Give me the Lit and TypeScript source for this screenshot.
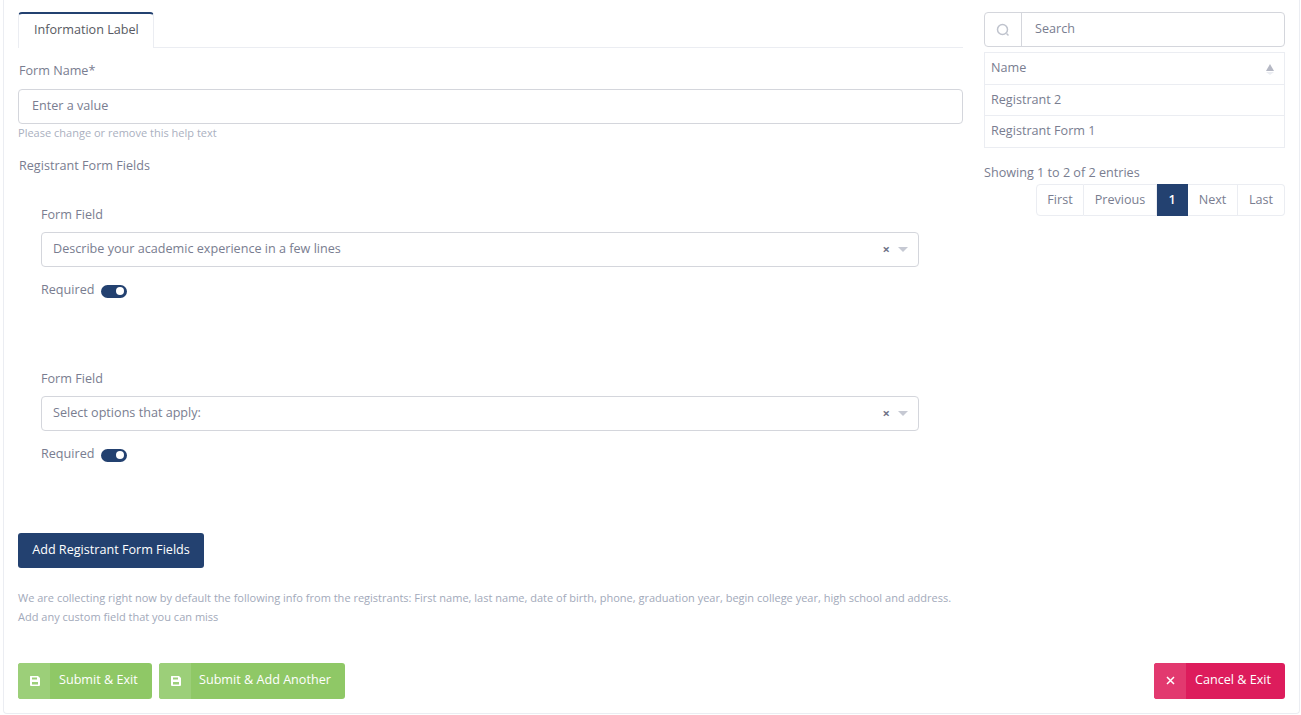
import { LitElement, html, css, svg } from "lit";
import { customElement } from "lit/decorators.js";

const saveIcon = svg`<svg class="ico" width="12" height="12" viewBox="0 0 12 12"><path fill="currentColor" fill-rule="evenodd" d="M1.500 1H9l2 2v7a1 1 0 0 1-1 1H2a1 1 0 0 1-1-1V1.500A.5.5 0 0 1 1.500 1ZM3 2.500V4.500H8V2.500ZM3 7V9.500H9V7Z"/></svg>`;
const closeIcon = svg`<svg width="9" height="9" viewBox="0 0 9 9" fill="none" stroke="currentColor" stroke-width="1.500"><path d="M1 1l7 7M8 1l-7 7"/></svg>`;

@customElement("app-root")
export class AppRoot extends LitElement {
  static styles = css`
    :host { display: block; font-family: "Open Sans", sans-serif; font-size: 12.62px; color: #797d90; }
    * { box-sizing: border-box; }
    .card { margin-left: 3px; width: 1297px; height: 714px; border: 1px solid #ebedf2; border-top: 0; border-radius: 0 0 4px 4px; padding: 12px 14px 14px 14px; display: flex; flex-direction: column; background: #fff; }
    .main { display: flex; gap: 21px; flex: 1; }
    .left { width: 945px; }
    .right { width: 301px; }
    .tabs { height: 36px; border-bottom: 1px solid #ebedf2; }
    .tab { display: inline-flex; align-items: center; height: 36px; width: 136px; padding: 0 0 4px 15px; color: #575962; border: 1px solid #ebedf2; border-top: 2px solid #234170; border-bottom: 0; border-radius: 4px 4px 0 0; background: #fff; }
    .label { height: 18px; line-height: 20px; }
    .name-label { margin-top: 13px; padding-left: 1px; }
    .input { height: 35px; border: 1px solid #d4d6dc; border-radius: 4px; display: flex; align-items: center; background: #fff; }
    .name-input { margin-top: 10px; padding: 0 0 2px 13px; }
    .help { font-size: 11.02px; line-height: 15px; color: #aab0c0; margin-top: 1px; }
    .fields-title { margin-top: 16px; padding-left: 1px; }
    .group { margin: 0 44px 0 23px; height: 164px; }
    .group.first { margin-top: 31px; }
    .select { margin-top: 9px; padding: 0 10px 0 11px; justify-content: space-between; }
    .t { padding-bottom: 2px; }
    .select-end { display: flex; align-items: center; gap: 8px; }
    .clear { font-size: 13px; font-weight: 700; color: #6f7488; line-height: 1; }
    .caret { width: 0; height: 0; border-left: 5px solid transparent; border-right: 5px solid transparent; border-top: 5px solid #c6c9d3; }
    .req { display: flex; align-items: center; gap: 7px; margin-top: 14px; line-height: 18px; }
    .req-t { padding-bottom: 2px; }
    .switch { width: 26px; height: 13px; border-radius: 7px; background: #234170; display: flex; align-items: center; justify-content: flex-end; padding-right: 3px; }
    .knob { width: 8px; height: 8px; border-radius: 50%; background: #fff; }
    .add { display: inline-flex; align-items: center; height: 35px; width: 186px; justify-content: center; padding-bottom: 2px; background: #234170; color: #fff; border-radius: 3px; font-weight: 500; }
    .note { margin-top: 20px; font-size: 11.02px; line-height: 19px; color: #a2a9ba; white-space: nowrap; }
    .search { display: flex; height: 35px; }
    .search-ico { width: 37px; border-right: 1px solid #d4d6dc; display: flex; align-items: center; justify-content: center; height: 100%; color: #bfc3cd; }
    .search-txt { padding: 0 0 2px 13px; }
    table { border-collapse: collapse; width: 100%; margin-top: 5px; }
    td, th { border: 1px solid #ebedf2; padding: 0 6px 2px; height: 31px; font-weight: 400; text-align: left; }
    th { height: 32px; padding-bottom: 2px; }
    tr:last-child td { height: 32px; padding-bottom: 3px; }
    .th-in { display: flex; justify-content: space-between; align-items: center; padding-right: 4px; }
    .sort { display: flex; flex-direction: column; gap: 1px; margin-top: 3px; }
    .sort::before { content: ""; width: 0; height: 0; border-left: 4px solid transparent; border-right: 4px solid transparent; border-bottom: 7px solid #b5b8c4; }
    .sort::after { content: ""; width: 0; height: 0; border-left: 4px solid transparent; border-right: 4px solid transparent; border-top: 3px solid #ebedf2; }
    .showing { margin-top: 15px; height: 18px; line-height: 20px; }
    .pager { display: flex; justify-content: flex-end; margin-top: 3px; }
    .pg { height: 32px; display: flex; align-items: center; justify-content: center; padding-bottom: 2px; border: 1px solid #ebedf2; border-left-width: 0; }
    .pg:first-child { border-left-width: 1px; border-radius: 4px 0 0 4px; }
    .pg:last-child { border-radius: 0 4px 4px 0; }
    .pg.on { background: #234170; border-color: #234170; color: #fff; font-weight: 600; }
    .w48 { width: 48px; }
    .w73 { width: 73px; }
    .w31 { width: 31px; }
    .w50 { width: 50px; }
    .w47 { width: 47px; }
    .actions { display: flex; gap: 7px; }
    .btn { height: 36px; display: flex; align-items: stretch; color: #fff; border-radius: 3px; overflow: hidden; }
    .btn-i { width: 32px; flex: none; display: flex; align-items: center; justify-content: center; padding: 0 0 1px 1px; }
    .btn-t { display: flex; align-items: center; padding: 0 0 4px 9px; white-space: nowrap; }
    .b134 { width: 134px; }
    .b186 { width: 186px; }
    .b131 { width: 131px; }
    .b186 .btn-t { padding-left: 8px; }
    .green { background: #8fc866; }
    .green .btn-i { background: #9ccf79; }
    .red { background: #dd1c5c; margin-left: auto; }
    .red .btn-i { background: #e2396f; }
  `;

  private field(label: string, first: boolean) {
    return html`<div class="group ${first ? "first" : ""}">
      <div class="label">Form Field</div>
      <div class="input select">
        <span class="t">${label}</span>
        <span class="select-end"><span class="clear">×</span><span class="caret"></span></span>
      </div>
      <div class="req"><span class="req-t">Required</span><span class="switch"><span class="knob"></span></span></div>
    </div>`;
  }

  render() {
    return html`<div class="card">
      <div class="main">
        <div class="left">
          <div class="tabs"><div class="tab">Information Label</div></div>
          <div class="label name-label">Form Name*</div>
          <div class="input name-input">Enter a value</div>
          <div class="help">Please change or remove this help text</div>
          <div class="label fields-title">Registrant Form Fields</div>
          ${this.field("Describe your academic experience in a few lines", true)}
          ${this.field("Select options that apply:", false)}
          <div class="add">Add Registrant Form Fields</div>
          <div class="note">We are collecting right now by default the following info from the registrants: First name, last name, date of birth, phone, graduation year, begin college year, high school and address.<br />Add any custom field that you can miss</div>
        </div>
        <div class="right">
          <div class="input search">
            <span class="search-ico"><svg width="14" height="14" viewBox="0 0 14 14" fill="none" stroke="currentColor" stroke-width="1.500"><circle cx="6.500" cy="6.500" r="5"/><path d="M10.500 10.500l2 2"/></svg></span>
            <span class="search-txt">Search</span>
          </div>
          <table>
            <tr><th><div class="th-in"><span>Name</span><span class="sort"></span></div></th></tr>
            <tr><td>Registrant 2</td></tr>
            <tr><td>Registrant Form 1</td></tr>
          </table>
          <div class="showing">Showing 1 to 2 of 2 entries</div>
          <div class="pager">
            <div class="pg w48">First</div>
            <div class="pg w73">Previous</div>
            <div class="pg on w31">1</div>
            <div class="pg w50">Next</div>
            <div class="pg w47">Last</div>
          </div>
        </div>
      </div>
      <div class="actions">
        <div class="btn green b134"><span class="btn-i">${saveIcon}</span><span class="btn-t">Submit &amp; Exit</span></div>
        <div class="btn green b186"><span class="btn-i">${saveIcon}</span><span class="btn-t">Submit &amp; Add Another</span></div>
        <div class="btn red b131"><span class="btn-i">${closeIcon}</span><span class="btn-t">Cancel &amp; Exit</span></div>
      </div>
    </div>`;
  }
}
